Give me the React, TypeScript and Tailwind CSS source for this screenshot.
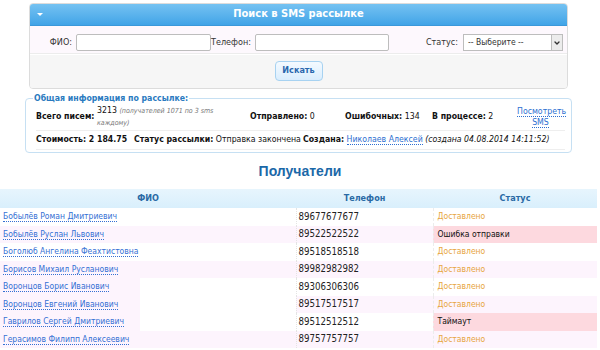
import { ChevronDown } from "lucide-react";

type Recipient = {
  name: string;
  phone: string;
  status: string;
  error?: boolean;
};

const recipients: Recipient[] = [
  { name: "Бобылёв Роман Дмитриевич", phone: "89677677677", status: "Доставлено" },
  { name: "Бобылёв Руслан Львович", phone: "89522522522", status: "Ошибка отправки", error: true },
  { name: "Боголюб Ангелина Феахтистовна", phone: "89518518518", status: "Доставлено" },
  { name: "Борисов Михаил Русланович", phone: "89982982982", status: "Доставлено" },
  { name: "Воронцов Борис Иванович", phone: "89306306306", status: "Доставлено" },
  { name: "Воронцов Евгений Иванович", phone: "89517517517", status: "Доставлено" },
  { name: "Гаврилов Сергей Дмитриевич", phone: "89512512512", status: "Таймаут", error: true },
  { name: "Герасимов Филипп Алексеевич", phone: "89757757757", status: "Доставлено" },
];

const SearchPanel = () => (
  <div className="ml-[29px] mt-[3px] w-[539px] rounded-[4px] border border-[#dcdcdc] overflow-hidden">
    {/* Header */}
    <div className="relative h-[22px] flex items-center justify-center bg-gradient-to-b from-[#74c2f2] to-[#40a4e7] border-b border-[#3a98da]">
      <span className="absolute left-[7px] top-[9px] w-0 h-0 border-l-[3px] border-r-[3px] border-t-[3px] border-l-transparent border-r-transparent border-t-white" />
      <span className="text-white font-bold text-[11px]">Поиск в SMS рассылке</span>
    </div>

    {/* Fields */}
    <div className="bg-[#fdf8fd] pt-[8px] pb-[2px] border-b border-[#ececec]">
      <div className="flex items-center h-[17px] text-[9px] text-[#333] whitespace-nowrap">
        <label className="w-[46px] text-right pr-[4px]">ФИО:</label>
        <input className="w-[135px] h-[17px] border border-[#bdbdbd] rounded-[2px] bg-white" />
        <label className="w-[44px] text-right pr-[5px]">Телефон:</label>
        <input className="w-[134px] h-[17px] border border-[#bdbdbd] rounded-[2px] bg-white" />
        <label className="w-[74px] text-right pr-[5px]">Статус:</label>
        <div className="w-[100px] h-[17px] border border-[#bdbdbd] bg-white flex items-center">
          <span className="flex-1 pl-[4px] text-[8.5px]">-- Выберите --</span>
          <span className="w-[11px] h-[15px] border-l border-[#bdbdbd] bg-[#ececec] flex items-center justify-center">
            <ChevronDown size={8} strokeWidth={4} color="#333" />
          </span>
        </div>
      </div>
    </div>

    {/* Button */}
    <div className="bg-[#f6f6f6] border-t border-white pt-[6px] pb-[7px] flex justify-center">
      <button className="w-[48px] h-[20px] rounded-[4px] border border-[#a7d2f1] bg-gradient-to-b from-[#f4faff] to-[#d9edfd] text-[9px] font-bold text-[#2a67ad]">
        Искать
      </button>
    </div>
  </div>
);

const InfoBox = () => (
  <fieldset className="ml-[25px] mt-[3px] w-[547px] h-[61px] rounded-[4px] border border-[#c6e0f3] pl-[10px] pr-[6px]">
    <legend className="-ml-[3px] px-[1px] text-[8.7px] font-bold text-[#2a7ac0] leading-[12px]">
      Общая информация по рассылке:
    </legend>
    <div className="text-[8.7px] text-[#111] whitespace-nowrap">
      <div className="flex items-center h-[27px] border-b border-[#eeeeee]">
        <div className="w-[61px] shrink-0 font-bold">Всего писем:</div>
        <div className="w-[153px] shrink-0">
          <div className="w-[122px] leading-[11px] whitespace-normal">
            <span>3213</span>{" "}
            <span className="text-[7px] italic text-[#777]">(получателей 1071 по 3 sms каждому)</span>
          </div>
        </div>
        <div className="w-[95px] shrink-0">
          <b>Отправлено:</b> 0
        </div>
        <div className="w-[87px] shrink-0">
          <b>Ошибочных:</b> 134
        </div>
        <div className="w-[85px] shrink-0">
          <b>В процессе:</b> 2
        </div>
        <div className="w-[47px] shrink-0 text-center leading-[11px] text-[#2d6fd1]">
          <span className="border-b border-dotted border-[#2d6fd1]">Посмотреть</span>
          <br />
          <span className="border-b border-dotted border-[#2d6fd1]">SMS</span>
        </div>
      </div>
      <div className="flex items-center h-[19px] border-b border-[#eeeeee]">
        <div className="w-[98px] shrink-0 font-bold">Стоимость: 2 184.75</div>
        <div className="w-[169px] shrink-0">
          <b>Статус рассылки:</b> Отправка закончена
        </div>
        <div className="shrink-0">
          <b>Создана:</b>{" "}
          <span className="text-[#2d6fd1] border-b border-dotted border-[#2d6fd1]">Николаев Алексей</span>{" "}
          <i>(создана 04.08.2014 14:11:52)</i>
        </div>
      </div>
    </div>
  </fieldset>
);

const Recipients = () => (
  <div>
    <h2 className="mt-[8px] text-center text-[14px] leading-[20px] font-bold text-[#1b68a8] font-['Liberation_Sans',Arial,sans-serif]">
      Получатели
    </h2>
    <table className="mt-[8px] w-[597px] border-collapse text-[8.5px] table-fixed">
      <thead>
        <tr className="h-[19px] bg-gradient-to-b from-[#e7f5fd] to-[#d9effc] text-[#2a6aa5] text-[9px] font-bold">
          <th className="w-[296px] font-bold">ФИО</th>
          <th className="w-[137px] font-bold">Телефон</th>
          <th className="w-[164px] font-bold">Статус</th>
        </tr>
      </thead>
      <tbody>
        {recipients.map((r, i) => {
          const shaded = i % 2 === 1;
          const rowBg = shaded ? "bg-[#fdf4fd]" : "bg-white";
          const nameBg =
            i >= 4 && i <= 6
              ? "bg-[linear-gradient(to_right,#fdf4fd_140px,#ffffff_140px)]"
              : rowBg;
          return (
            <tr key={r.phone} className="h-[17.5px]">
              <td className={`${nameBg} pl-[3px] border-r border-dotted border-[#e4e4e4]`}>
                <span className="text-[#3470d4] border-b border-dotted border-[#3470d4] leading-[12px]">{r.name}</span>
              </td>
              <td className={`${rowBg} pl-[2px] text-[9.6px] text-[#222]`}>{r.phone}</td>
              <td
                className={`pl-[4px] border-l border-dashed border-[#ececec] ${
                  r.error ? "bg-[#fdd9df] text-[#111]" : `${rowBg} text-[#e7a541]`
                }`}
              >
                {r.status}
              </td>
            </tr>
          );
        })}
      </tbody>
    </table>
  </div>
);

export default function App() {
  return (
    <div className="w-[600px] h-[350px] overflow-hidden bg-white font-['DejaVu_Sans_Condensed','Liberation_Sans',sans-serif]">
      <SearchPanel />
      <InfoBox />
      <Recipients />
    </div>
  );
}
